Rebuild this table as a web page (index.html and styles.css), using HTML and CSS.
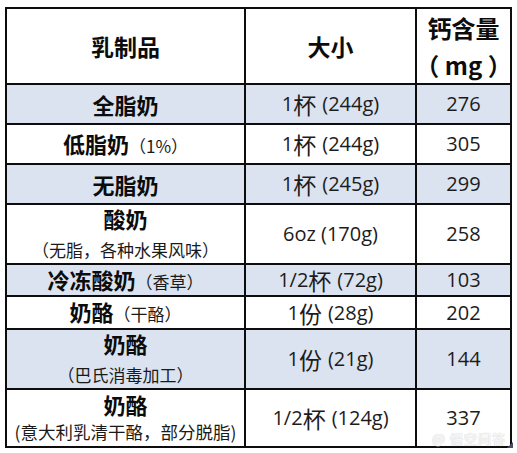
FILE: index.html
```html
<!DOCTYPE html>
<html lang="zh-CN">
<head>
<meta charset="utf-8">
<title>乳制品钙含量</title>
<link rel="stylesheet" href="styles.css">
</head>
<body>
<div class="sheet">
  <div class="grid">
    <div class="cell head"><span class="b">乳制品</span></div>
    <div class="cell head"><span class="b">大小</span></div>
    <div class="cell head two"><span class="b big">钙含量</span><span class="b big">（ mg ）</span></div>

    <div class="cell shade"><span class="b">全脂奶</span></div>
    <div class="cell shade val">1<span class="cj">杯</span>(244g)</div>
    <div class="cell shade val">276</div>

    <div class="cell"><span><span class="b">低脂奶</span><span class="note">（1%）</span></span></div>
    <div class="cell val">1<span class="cj">杯</span>(244g)</div>
    <div class="cell val">305</div>

    <div class="cell shade"><span class="b">无脂奶</span></div>
    <div class="cell shade val">1<span class="cj">杯</span>(245g)</div>
    <div class="cell shade val">299</div>

    <div class="cell two"><span class="b">酸奶</span><span class="note">（无脂，各种水果风味）</span></div>
    <div class="cell val">6oz&nbsp;(170g)</div>
    <div class="cell val">258</div>

    <div class="cell shade"><span><span class="b">冷冻酸奶</span><span class="note">（香草）</span></span></div>
    <div class="cell shade val">1/2<span class="cj">杯</span>(72g)</div>
    <div class="cell shade val">103</div>

    <div class="cell"><span><span class="b">奶酪</span><span class="note">（干酪）</span></span></div>
    <div class="cell val">1<span class="cj">份</span>(28g)</div>
    <div class="cell val">202</div>

    <div class="cell shade two"><span class="b">奶酪</span><span class="note">（巴氏消毒加工）</span></div>
    <div class="cell shade val">1<span class="cj">份</span>(21g)</div>
    <div class="cell shade val">144</div>

    <div class="cell two tight"><span class="b">奶酪</span><span class="note">(意大利乳清干酪，部分脱脂)</span></div>
    <div class="cell val">1/2<span class="cj">杯</span>(124g)</div>
    <div class="cell val">337</div>
  </div>
  <div class="mark">@ 悟空问答</div>
  <div class="corner"></div>
</div>
</body>
</html>
```

FILE: styles.css
```css
html, body {
  margin: 0;
  padding: 0;
  background: #ffffff;
}

body {
  padding: 7px 0 0 5px;
  font-family: "Noto Sans CJK SC", "Noto Sans", sans-serif;
  color: #111;
}

.sheet {
  position: relative;
  width: 507px;
}

.grid {
  display: grid;
  grid-template-columns: 237px 169px 93px;
  grid-template-rows: 74px 38px 38px 38px 58px 30px 31px 58px 56px;
  gap: 2px;
  padding: 2px;
  background: #0d0d0d;
}

.cell {
  background: #ffffff;
  display: flex;
  align-items: center;
  justify-content: center;
  text-align: center;
  white-space: nowrap;
}

.cell.shade {
  background: #dae3ef;
}

.cell.two {
  flex-direction: column;
}

.b {
  font-weight: 700;
  font-size: 22px;
  line-height: 31px;
  color: #0c0c0c;
}

.head .b {
  font-size: 23px;
}

.head .big {
  font-size: 24px;
  line-height: 37px;
}

.note {
  font-weight: 400;
  font-size: 17px;
  line-height: 31px;
  color: #1a1a1a;
}

.tight .b,
.tight .note {
  line-height: 28px;
}

.tight .note {
  font-size: 17.5px;
}

.val {
  font-family: "Open Sans", "Noto Sans CJK SC", sans-serif;
  font-size: 20px;
  line-height: 22px;
  color: #1c1c1c;
}

.cj {
  font-family: "Noto Sans CJK SC", sans-serif;
  font-size: 23px;
  font-weight: 400;
  margin-right: 6px;
}

.mark {
  position: absolute;
  right: 6px;
  bottom: 2px;
  font-size: 13px;
  line-height: 15px;
  font-weight: 700;
  color: #f4f4f4;
  text-shadow: 0 0 1px #b8b8b8;
  letter-spacing: 1px;
  opacity: 0.8;
}

.corner {
  position: absolute;
  right: -1px;
  bottom: 0;
  width: 0;
  height: 0;
  border-left: 6px solid transparent;
  border-bottom: 6px solid #4a4f66;
}
```
